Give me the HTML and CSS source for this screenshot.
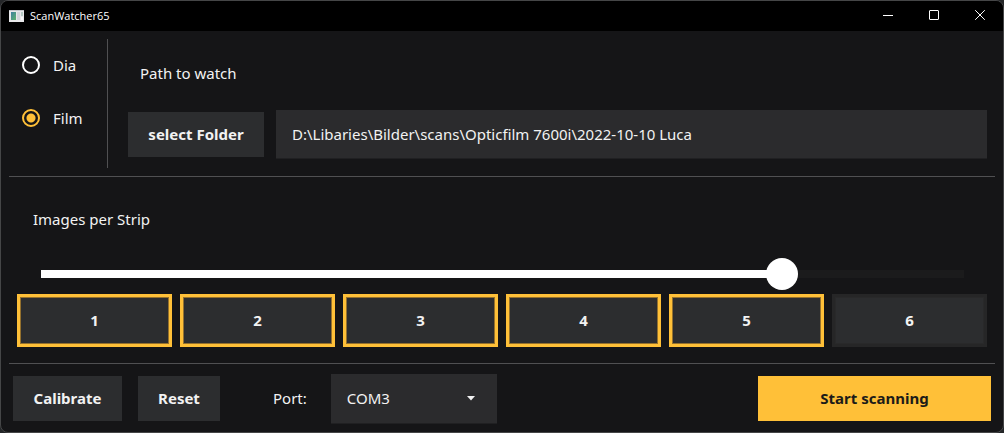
FILE: index.html
```html
<!DOCTYPE html>
<html lang="en">
<head>
<meta charset="utf-8">
<title>ScanWatcher65</title>
<link rel="stylesheet" href="styles.css">
</head>
<body>
<div class="window">
  <header class="titlebar">
    <svg class="app-icon" width="15" height="12" viewBox="0 0 15 12" aria-hidden="true">
      <defs>
        <linearGradient id="screen" x1="0" y1="0" x2="1" y2="1">
          <stop offset="0" stop-color="#3f7fa0"/>
          <stop offset="1" stop-color="#5fb36c"/>
        </linearGradient>
      </defs>
      <rect width="15" height="12" fill="#e8e8ea"/>
      <rect x="0" y="0" width="15" height="1" fill="#c4c6ca"/>
      <rect x="2" y="2" width="5" height="8" fill="url(#screen)"/>
      <rect x="8" y="2" width="3" height="8" fill="#d3d5da"/>
      <rect x="12" y="2" width="2" height="4" fill="#b5c9c4"/>
      <rect x="12" y="7" width="2" height="3" fill="#f8f8f8"/>
    </svg>
    <h1 class="title">ScanWatcher65</h1>
    <div class="window-controls">
      <button class="window-button" aria-label="Minimize"><svg width="10" height="10" viewBox="0 0 10 10"><path d="M0 5.5H10" stroke="#fff"/></svg></button>
      <button class="window-button" aria-label="Maximize"><svg width="10" height="10" viewBox="0 0 10 10"><rect x=".5" y=".5" width="9" height="9" rx=".5" fill="none" stroke="#fff"/></svg></button>
      <button class="window-button" aria-label="Close"><svg width="10" height="10" viewBox="0 0 10 10"><path d="M.2 .2L9.8 9.8M9.8 .2L.2 9.8" stroke="#fff"/></svg></button>
    </div>
  </header>
  <main class="content">
    <section class="source">
      <div class="modes">
        <label class="mode"><input class="radio" type="radio" name="mode">Dia</label>
        <label class="mode"><input class="radio" type="radio" name="mode" checked>Film</label>
      </div>
      <div class="watch">
        <label class="watch-label" for="path">Path to watch</label>
        <div class="watch-row">
          <button class="button folder">select Folder</button>
          <input class="path" id="path" type="text" value="D:\Libaries\Bilder\scans\Opticfilm 7600i\2022-10-10 Luca">
        </div>
      </div>
    </section>
    <section class="strip">
      <label class="strip-label" for="count">Images per Strip</label>
      <input class="slider" id="count" type="range" min="1" max="6" value="5">
      <div class="frames">
        <button class="frame selected">1</button>
        <button class="frame selected">2</button>
        <button class="frame selected">3</button>
        <button class="frame selected">4</button>
        <button class="frame selected">5</button>
        <button class="frame">6</button>
      </div>
    </section>
    <footer class="actions">
      <button class="button calibrate">Calibrate</button>
      <button class="button reset">Reset</button>
      <label class="port-label" for="port">Port:</label>
      <div class="port">
        <select class="port-select" id="port"><option>COM3</option></select>
        <svg class="port-arrow" width="8" height="5" viewBox="0 0 8 5" aria-hidden="true"><path d="M0 0H8L4 4.5Z" fill="#f2f2f2"/></svg>
      </div>
      <button class="button start">Start scanning</button>
    </footer>
  </main>
</div>
</body>
</html>
```

FILE: styles.css
```css
* {
  box-sizing: border-box;
}

body {
  margin: 0;
  background: #242628;
  color: #f2f2f2;
  font: 15px/20px "Noto Sans", sans-serif;
}

button,
input,
select {
  margin: 0;
  font: inherit;
  color: inherit;
}

.window {
  display: flex;
  flex-direction: column;
  min-height: 100vh;
  border: 1px solid #454647;
  border-radius: 8px;
  background: #151517;
  overflow: hidden;
}

.titlebar {
  display: flex;
  align-items: center;
  height: 30px;
  padding-left: 8px;
  background: #000;
}

.title {
  margin: 0 0 0 6px;
  font: 11px/16px "Open Sans", sans-serif;
  color: #fff;
}

.window-controls {
  display: flex;
  align-self: stretch;
  margin-left: auto;
}

.window-button {
  display: flex;
  align-items: center;
  justify-content: center;
  width: 46px;
  padding: 0 0 2px;
  border: 0;
  background: none;
}

.content {
  display: flex;
  flex-direction: column;
  flex: 1;
  padding: 8px;
}

.source {
  display: flex;
  height: 138px;
  padding-bottom: 8px;
  border-bottom: 1px solid #505052;
}

.modes {
  display: flex;
  flex-direction: column;
  gap: 33px;
  width: 99px;
  padding: 16px 0 0 13px;
  border-right: 1px solid #505052;
}

.mode {
  display: flex;
  align-items: center;
  gap: 13px;
}

.radio {
  appearance: none;
  width: 18px;
  height: 18px;
  border: 2px solid #fff;
  border-radius: 50%;
}

.radio:checked {
  border-color: #ffc038;
  background: radial-gradient(circle, #ffc038 4px, transparent 5px);
}

.watch {
  flex: 1;
  padding: 24px 8px 0 20px;
}

.watch-label {
  display: block;
  margin-left: 12px;
}

.watch-row {
  display: flex;
  align-items: center;
  gap: 12px;
  margin-top: 27px;
}

.button {
  height: 45px;
  padding: 0 0 2px;
  border: 0;
  background: #2c2d2f;
  font-weight: 700;
}

.folder {
  width: 136px;
}

.path {
  flex: 1;
  min-width: 0;
  height: 49px;
  padding: 0 16px 1px;
  border: 0;
  border-bottom: 1px solid #202022;
  background: #2b2b2d;
}

.strip {
  display: flex;
  flex-direction: column;
  padding: 32px 8px 16px;
  border-bottom: 1px solid #505052;
}

.strip-label {
  margin-left: 16px;
}

.slider {
  appearance: none;
  height: 32px;
  margin: 29px 4px 4px 8px;
  background: linear-gradient(#fff, #fff) 16px 50% / calc(80% - 26px) 8px no-repeat,
    linear-gradient(#1b1b1c, #1b1b1c) 16px 50% / calc(100% - 35px) 8px no-repeat;
}

.slider::-webkit-slider-thumb {
  appearance: none;
  width: 32px;
  height: 32px;
  border-radius: 50%;
  background: #fff;
}

.frames {
  display: grid;
  grid-template-columns: repeat(6, 1fr);
  gap: 8px;
}

.frame {
  height: 53px;
  padding: 0 0 2px;
  border: 3px solid #262627;
  background: #2c2d2f;
  box-shadow: inset 0 0 0 1px #29292a;
  font-weight: 700;
}

.frame.selected {
  border-color: #ffc038;
  box-shadow: inset 0 0 0 1px #95712e;
}

.actions {
  display: flex;
  align-items: flex-start;
  gap: 16px;
  padding: 10px 4px 0;
}

.actions .button {
  margin-top: 2px;
}

.calibrate {
  width: 109px;
}

.reset {
  width: 82px;
}

.port-label {
  margin: 14px 0 0 37px;
}

.port {
  position: relative;
  width: 166px;
  margin-left: 8px;
}

.port-select {
  display: block;
  appearance: none;
  width: 100%;
  height: 50px;
  padding: 0 16px 1px;
  border: 0;
  border-bottom: 1px solid #202022;
  border-radius: 0;
  background: #2b2b2d;
}

.port-arrow {
  position: absolute;
  top: 22px;
  right: 22px;
  pointer-events: none;
}

.start {
  width: 233px;
  margin-left: auto;
  background: #ffc038;
  color: #1c1b18;
}
```
